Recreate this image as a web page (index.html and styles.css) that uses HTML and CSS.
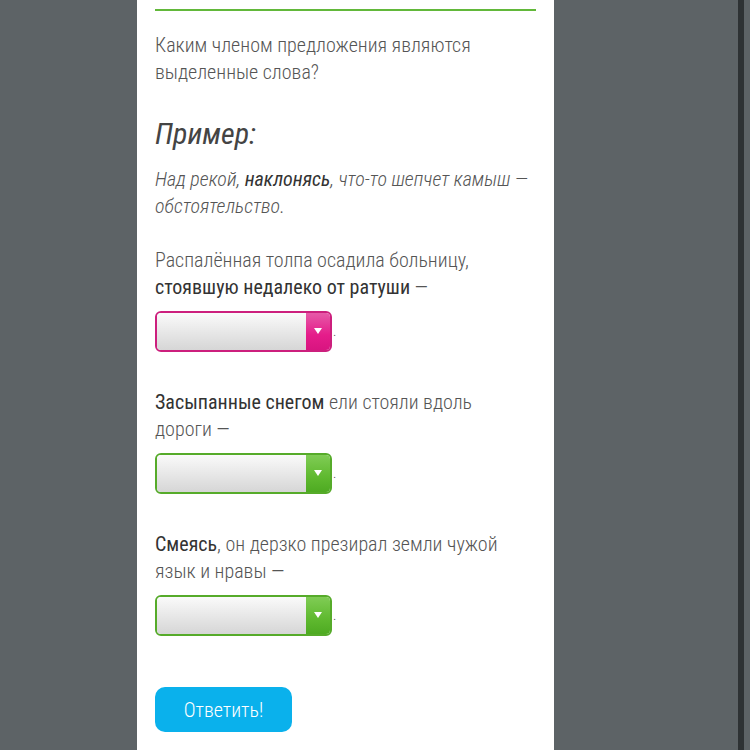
FILE: index.html
```html
<!DOCTYPE html>
<html lang="ru">
<head>
<meta charset="utf-8">
<title>Тест</title>
<link rel="stylesheet" href="styles.css">
</head>
<body>
<div class="page">
  <main class="card">
    <hr class="rule">
    <p class="question">Каким членом предложения являются выделенные слова?</p>
    <h2 class="example-title">Пример:</h2>
    <p class="example">Над рекой, <b>наклонясь</b>, что-то шепчет камыш — обстоятельство.</p>

    <div class="task">
      <p class="sentence">Распалённая толпа осадила больницу, <b>стоявшую недалеко от ратуши</b>&nbsp;—</p>
      <div class="answer"><span class="select select-pink"><span class="field"></span><span class="arrow"></span></span><span class="dot">.</span></div>
    </div>

    <div class="task">
      <p class="sentence"><b>Засыпанные снегом</b> ели стояли вдоль дороги&nbsp;—</p>
      <div class="answer"><span class="select select-green"><span class="field"></span><span class="arrow"></span></span><span class="dot">.</span></div>
    </div>

    <div class="task">
      <p class="sentence"><b>Смеясь</b>, он дерзко презирал земли чужой язык и нравы&nbsp;—</p>
      <div class="answer"><span class="select select-green"><span class="field"></span><span class="arrow"></span></span><span class="dot">.</span></div>
    </div>

    <button class="submit">Ответить!</button>
  </main>
  <div class="scrollbar"></div>
</div>
</body>
</html>
```

FILE: styles.css
```css
html, body {
  margin: 0;
  padding: 0;
  height: 100%;
  overflow: hidden;
}
body {
  background: #5d6366;
  font-family: "Roboto Condensed", Roboto, "Liberation Sans", sans-serif;
  font-stretch: 80%;
  font-weight: 300;
  color: #555;
}
.page {
  display: flex;
  height: 750px;
  padding-left: 137px;
}
.card {
  width: 381px;
  background: #fff;
  padding: 9px 18px 0 18px;
  flex: none;
}
.scrollbar {
  width: 6px;
  margin-left: 184px;
  background: #2e3234;
  flex: none;
}
.rule {
  border: 0;
  height: 2px;
  background: #62b83a;
  margin: 0;
}
.question {
  font-size: 20px;
  line-height: 27px;
  margin: 21px 0 0 0;
}
.example-title {
  font-size: 30px;
  font-style: italic;
  font-weight: 400;
  color: #444;
  line-height: 34px;
  margin: 31px 0 0 0;
}
.example {
  font-size: 20px;
  line-height: 27px;
  font-style: italic;
  margin: 15px 0 0 0;
}
.example b, .sentence b {
  font-weight: 400;
  color: #333;
}
.task {
  margin-top: 27px;
}
.task + .task {
  margin-top: 37px;
}
.sentence {
  font-size: 20px;
  line-height: 27px;
  margin: 0;
}
.answer {
  display: flex;
  align-items: flex-end;
  margin-top: 10px;
}
.select {
  display: flex;
  width: 173px;
  height: 37px;
  border: 2px solid;
  border-radius: 6px;
  overflow: hidden;
}
.field {
  flex: 1;
  background: linear-gradient(#fafafa, #e6e6e6 55%, #d6d6d6);
}
.arrow {
  width: 24px;
  display: flex;
  align-items: center;
  justify-content: center;
}
.arrow::after {
  content: "";
  border-left: 4px solid transparent;
  border-right: 4px solid transparent;
  border-top: 6px solid #fff;
  margin-top: -2px;
}
.select-pink { border-color: #cc1f7d; }
.select-pink .arrow { background: linear-gradient(#e65aa8, #e51c8a 60%, #d81580); }
.select-green { border-color: #56ab2a; }
.select-green .arrow { background: linear-gradient(#80cc55, #5fb92f 60%, #4eaa22); }
.dot {
  font-size: 14px;
  line-height: 14px;
  color: #555;
  margin-left: 1px;
  margin-bottom: 14px;
}
.submit {
  display: block;
  margin-top: 51px;
  width: 137px;
  height: 45px;
  border: 0;
  border-radius: 10px;
  background: #0ab1ec;
  color: #fff;
  font-family: inherit;
  font-stretch: 80%;
  font-weight: 300;
  font-size: 20px;
  padding: 0;
}
```
